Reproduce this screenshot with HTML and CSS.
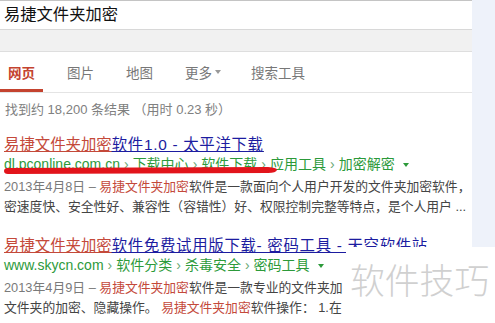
FILE: index.html
```html
<!DOCTYPE html>
<html lang="zh-CN">
<head>
<meta charset="utf-8">
<title>易捷文件夹加密 - 搜索</title>
<link rel="stylesheet" href="styles.css">
</head>
<body>
<div class="page">
  <div class="main">
    <div class="searchbar">易捷文件夹加密</div>
    <div class="band"></div>
    <nav class="tabs">
      <span class="tab active">网页</span>
      <span class="tab">图片</span>
      <span class="tab">地图</span>
      <span class="tab">更多<i class="caret"></i></span>
      <span class="tab last">搜索工具</span>
    </nav>
    <div class="count">找到约 18,200 条结果 （用时 0.23 秒）</div>

    <div class="result first">
      <div class="title"><span class="kw">易捷文件夹加密</span><span class="rest">软件1.0 - 太平洋下载</span></div>
      <div class="url">dl.pconline.com.cn<span class="sep">›</span>下载中心<span class="sep">›</span>软件下载<span class="sep">›</span>应用工具<span class="sep">›</span>加密解密<i class="gcaret"></i></div>
      <div class="snippet">
        <div class="line"><span class="date">2013年4月8日 – </span><span class="hl">易捷文件夹加密</span>软件是一款面向个人用户开发的文件夹加密软件，</div>
        <div class="line">密速度快、安全性好、兼容性（容错性）好、权限控制完整等特点，是个人用户 ...</div>
      </div>
    </div>

    <div class="result">
      <div class="title"><span class="kw">易捷文件夹加密</span><span class="rest">软件免费试用版下载-&nbsp;密码工具&nbsp;- 天空软件站</span></div>
      <div class="url">www.skycn.com<span class="sep">›</span>软件分类<span class="sep">›</span>杀毒安全<span class="sep">›</span>密码工具<i class="gcaret"></i></div>
      <div class="snippet">
        <div class="line"><span class="date">2013年4月9日 – </span><span class="hl">易捷文件夹加密</span>软件是一款专业的文件夹加</div>
        <div class="line">文件夹的加密、隐藏操作。 <span class="hl">易捷文件夹加密</span>软件操作： 1.在</div>
      </div>
    </div>
  </div>
  <div class="aside"></div>

  <svg class="scribble" width="290" height="16" viewBox="0 0 290 16" aria-hidden="true">
    <path d="M4,7 Q4,4 8,4 L268,3 Q278,4 277,6 Q276,9 268,9 L8,10 Q4,10 4,7 Z" fill="#e2141b"/>
  </svg>

  <div class="watermark">软件技巧</div>
</div>
</body>
</html>
```

FILE: styles.css
```css
* { box-sizing: border-box; }

html, body {
  margin: 0;
  padding: 0;
  background: #fff;
}

body {
  font-family: "Liberation Sans", "Noto Sans CJK SC", sans-serif;
  color: #333;
}

.page {
  position: relative;
  display: flex;
  width: 495px;
  height: 323px;
  overflow: hidden;
}

.main {
  width: 472px;
  flex: none;
}

.aside {
  flex: 1;
  height: 248px;
  background: #eef2fa;
}

.searchbar {
  height: 30px;
  border-top: 1px solid #c4c4c4;
  border-bottom: 1px solid #d8d8d8;
  padding-left: 4px;
  font-size: 16.3px;
  line-height: 27px;
  color: #111;
}

.band {
  height: 22px;
  background: #f1f1f1;
  border-bottom: 1px solid #dedede;
}

.tabs {
  display: flex;
  gap: 16px;
  height: 41px;
  border-bottom: 1px solid #e4e4e4;
}

.tab {
  position: relative;
  display: flex;
  align-items: center;
  padding: 0 8px;
  height: 40px;
  font-size: 13.5px;
  color: #777;
}

.tab.last { margin-left: -2px; }

.tab.active {
  color: #c4432f;
  font-weight: bold;
}

.tab.active::after {
  content: "";
  position: absolute;
  left: 0;
  right: 0;
  bottom: 0;
  height: 3px;
  background: #c4432f;
}

.caret {
  display: inline-block;
  margin-left: 3px;
  width: 0;
  height: 0;
  border-left: 3.5px solid transparent;
  border-right: 3.5px solid transparent;
  border-top: 4px solid #999;
}

.count {
  margin-top: 7px;
  padding-left: 5px;
  font-size: 13px;
  line-height: 20px;
  color: #808080;
  white-space: nowrap;
}

.result {
  padding-left: 4px;
  margin-top: 20px;
  white-space: nowrap;
}

.result.first { margin-top: 16px; }

.title {
  font-size: 15.4px;
  line-height: 18px;
  text-decoration: underline;
}

.title .kw {
  color: #c4493a;
  text-decoration: underline;
}

.title .rest {
  color: #1c1ca0;
  letter-spacing: 0.7px;
  text-decoration: underline;
}

.url {
  font-size: 14px;
  line-height: 20px;
  color: #2c9a3a;
}

.sep {
  margin: 0 4px;
  color: #6aa874;
}

.gcaret {
  display: inline-block;
  margin-left: 8px;
  vertical-align: middle;
  width: 0;
  height: 0;
  border-left: 3.5px solid transparent;
  border-right: 3.5px solid transparent;
  border-top: 4px solid #2c9a3a;
}

.snippet {
  margin-top: 3px;
  font-size: 12.8px;
  line-height: 20px;
  color: #444;
}

.date { color: #7a7a7a; }

.hl { color: #c4493a; }

.scribble {
  position: absolute;
  left: 0;
  top: 164px;
}

.watermark {
  position: absolute;
  left: 346px;
  top: 247px;
  width: 149px;
  height: 76px;
  background: #fff;
  padding-left: 4px;
  padding-top: 12px;
  font-family: "Noto Sans CJK SC", sans-serif;
  font-size: 34.8px;
  font-weight: 300;
  line-height: 40px;
  color: #d0d0d0;
  white-space: nowrap;
}
```
